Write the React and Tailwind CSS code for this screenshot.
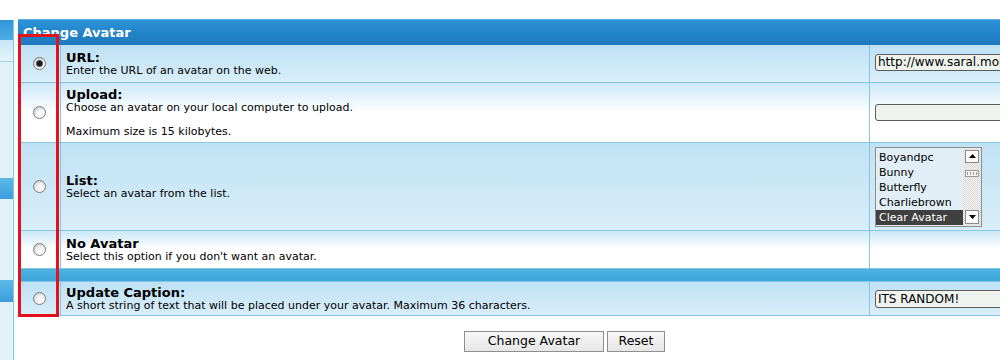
const AVATARS = ['Boyandpc', 'Bunny', 'Butterfly', 'Charliebrown', 'Clear Avatar'];

function Radio({ checked }) {
  return (
    <span className="flex size-[13px] items-center justify-center rounded-full border border-[#7d7d7d] bg-[radial-gradient(circle_at_65%_70%,#ffffff_0%,#f2f2f2_45%,#b8b8b8_100%)]">
      {checked && <span className="size-[5px] rounded-full bg-[#1a1a1a] shadow-[0_0_0_1px_#555]" />}
    </span>
  );
}

function Field({ value, top = false }) {
  return (
    <div
      className={
        'h-[17px] w-[200px] overflow-hidden whitespace-nowrap rounded-[3px] border border-[#5b5b5b] bg-[#eef3ee] pl-[2px] text-[12px] leading-[15px] text-black' +
        (top ? ' mt-[-3px]' : '')
      }
    >
      {value}
    </div>
  );
}

function ListBox() {
  return (
    <div className="flex h-[80px] w-[107px] border border-[#8e8e8e] bg-[#e2eef6]">
      <ul className="flex-1 pt-[2px] text-[11px] leading-[15px] text-black">
        {AVATARS.map((a) => (
          <li key={a} className={a === 'Clear Avatar' ? 'h-[15px] bg-[#404040] pl-[3px] text-white' : 'h-[15px] pl-[3px]'}>
            {a}
          </li>
        ))}
      </ul>
      <div className="flex w-[18px] flex-col items-center bg-[repeating-conic-gradient(#d6d6d6_0_25%,#f6f6f6_0_50%)] bg-size-[2px_2px] py-[2px]">
        <span className="flex h-[13px] w-[14px] items-center justify-center border border-[#8a8a8a] bg-[#fafafa]">
          <svg width="7" height="4" viewBox="0 0 7 4"><path d="M0 4 L3.5 0 L7 4 Z" fill="#000" /></svg>
        </span>
        <span className="mt-[7px] flex h-[7px] w-[14px] items-center justify-center gap-[2px] border border-[#9a9a9a] bg-[#f4f4f4]">
          <span className="h-[3px] w-px bg-[#9a9a9a]" />
          <span className="h-[3px] w-px bg-[#9a9a9a]" />
          <span className="h-[3px] w-px bg-[#9a9a9a]" />
          <span className="h-[3px] w-px bg-[#9a9a9a]" />
        </span>
        <span className="flex-1" />
        <span className="flex h-[14px] w-[14px] items-center justify-center border border-[#8a8a8a] bg-[#fafafa]">
          <svg width="7" height="4" viewBox="0 0 7 4"><path d="M0 0 L3.5 4 L7 0 Z" fill="#000" /></svg>
        </span>
      </div>
    </div>
  );
}

const ROWS = [
  {
    id: 'url',
    h: 'h-[38px]',
    bg: 'bg-linear-to-b from-[#bde1f4] to-[#d9eef9]',
    checked: true,
    title: 'URL:',
    lines: ['Enter the URL of an avatar on the web.'],
    field: <Field value="http://www.saral.mobi/random.gif" top />,
  },
  {
    id: 'upload',
    h: 'h-[60px]',
    bg: 'bg-linear-to-b from-[#cce8f7] via-[#ffffff] to-[#ffffff]',
    title: 'Upload:',
    lines: ['Choose an avatar on your local computer to upload.', '\u00a0', 'Maximum size is 15 kilobytes.'],
    field: <Field value="" />,
  },
  {
    id: 'list',
    h: 'h-[88px]',
    bg: 'bg-linear-to-b from-[#c0e2f5] to-[#d8edf8]',
    title: 'List:',
    lines: ['Select an avatar from the list.'],
    field: <ListBox />,
  },
  {
    id: 'none',
    h: 'h-[38px]',
    bg: 'bg-linear-to-b from-[#cce8f7] via-[#ffffff] to-[#ffffff]',
    title: 'No Avatar',
    lines: ["Select this option if you don't want an avatar."],
    field: null,
  },
];

function Row({ row }) {
  return (
    <div className={`grid grid-cols-[43px_809px_1fr] border-b border-[#86c6e2] ${row.h} ${row.bg}`}>
      <div className="flex items-center justify-center border-r border-[#86c6e2]">
        <Radio checked={row.checked} />
      </div>
      <div className="flex flex-col justify-center border-r border-[#86c6e2] pl-[5px] text-black">
        <span className="text-[13px] font-bold leading-[15px]">{row.title}</span>
        {row.lines.map((l, i) => (
          <span key={i} className="text-[11px] leading-[12px]">{l}</span>
        ))}
      </div>
      <div className="flex items-center pl-[5px]">{row.field}</div>
    </div>
  );
}

function SideStrip() {
  return (
    <div className="mt-px flex h-[341px] w-[14px] shrink-0 flex-col border-r border-[#7fcbe6] bg-[#d9eef9]">
      <div className="h-[20px] bg-linear-to-b from-[#2f95d8] to-[#4eaee3]" />
      <div className="h-[22px] border-b border-[#9fd4ec] bg-linear-to-b from-[#c8e7f7] to-[#e6f4fb]" />
      <div className="h-[116px] bg-[#e3f2fa]" />
      <div className="h-[21px] bg-linear-to-b from-[#5cb9e8] to-[#3a9ddd]" />
      <div className="h-[81px] bg-[#e3f2fa]" />
      <div className="h-[22px] bg-linear-to-b from-[#5cb9e8] to-[#3a9ddd]" />
      <div className="flex-1 bg-[#e3f2fa]" />
    </div>
  );
}

export default function App() {
  return (
    <div className="relative h-[360px] w-[1000px] overflow-hidden bg-white font-['DejaVu_Sans','Noto_Sans',sans-serif]">
      <div className="flex pt-[19px]">
        <SideStrip />
        <div className="ml-[4px] w-[1093px] shrink-0">
          <div className="flex h-[26px] items-center border-t border-[#62ade0] bg-linear-to-b from-[#2c93d8] to-[#1d77bc] pl-[5px] text-[13px] font-bold text-white">
            Change Avatar
          </div>
          {ROWS.map((r) => (
            <Row key={r.id} row={r} />
          ))}
          <div className="h-[12px] bg-linear-to-b from-[#4cb2e2] to-[#3ea6dc]" />
          <div className="grid h-[35px] grid-cols-[43px_809px_1fr] border-y border-[#86c6e2] bg-linear-to-b from-[#bde1f4] to-[#d9eef9]">
            <div className="flex items-center justify-center border-r border-[#86c6e2]">
              <Radio />
            </div>
            <div className="flex flex-col justify-center border-r border-[#86c6e2] pl-[5px] text-black">
              <span className="text-[13px] font-bold leading-[15px]">Update Caption:</span>
              <span className="text-[11px] leading-[12px]">
                A short string of text that will be placed under your avatar. Maximum 36 characters.
              </span>
            </div>
            <div className="flex items-center pl-[5px]">
              <div className="h-[18px] w-[200px] rounded-[3px] border border-[#5b5b5b] bg-[#eef3ee] pl-[2px] text-[12px] leading-[16px] text-black">
                ITS RANDOM!
              </div>
            </div>
          </div>
          <div className="mt-[15px] flex justify-center gap-[3px]">
            <button type="button" className="h-[21px] w-[140px] border border-[#8f8f8f] bg-linear-to-b from-[#f8f8f8] to-[#e6e6e6] text-[12.5px] text-black">
              Change Avatar
            </button>
            <button type="button" className="h-[21px] w-[58px] border border-[#8f8f8f] bg-linear-to-b from-[#f8f8f8] to-[#e6e6e6] text-[12.5px] text-black">
              Reset
            </button>
          </div>
        </div>
      </div>
      {/* highlight annotation */}
      <div className="pointer-events-none absolute left-[18px] top-[34px] h-[283px] w-[41px] border-[3px] border-[#e3131b]" />
    </div>
  );
}
